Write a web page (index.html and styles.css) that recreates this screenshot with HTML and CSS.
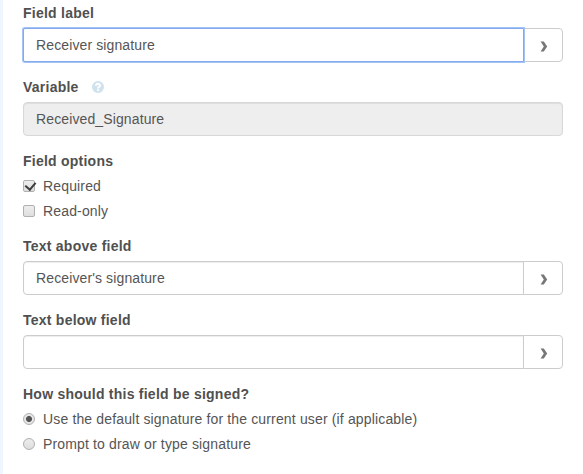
FILE: index.html
```
<!DOCTYPE html>
<html lang="en">
<head>
    <meta charset="UTF-8">
    <meta name="viewport" content="width=device-width, initial-scale=1.0">
    <title>Signature field</title>
    <link rel="stylesheet" href="styles.css">
</head>
<body>
    <form class="panel">
        <div class="form-group">
            <label class="title" for="label">Field label</label>
            <div class="input-group">
                <input class="form-control focused" type="text" id="label" value="Receiver signature">
                <button class="btn" type="button"><svg width="8" height="11" viewBox="0 0 8 11"><path d="M0.6 0.5h3.2l3.4 5-3.4 5H0.6l3.2-5z"/></svg></button>
            </div>
        </div>

        <div class="form-group">
            <label class="title" for="variable">Variable
                <svg class="help" width="12" height="12" viewBox="0 0 12 12"><circle cx="6" cy="6" r="6"/><path d="M4 4.7C4 2.2 8 2.2 8 4.5 8 6 6 5.8 6 7.4M6 8.3v1.7"/></svg>
            </label>
            <input class="form-control" type="text" id="variable" value="Received_Signature" disabled>
        </div>

        <div class="form-group">
            <div class="title">Field options</div>
            <label class="choice"><input type="checkbox" checked><span>Required</span></label>
            <label class="choice"><input type="checkbox"><span>Read-only</span></label>
        </div>

        <div class="form-group">
            <label class="title" for="above">Text above field</label>
            <div class="input-group">
                <input class="form-control" type="text" id="above" value="Receiver's signature">
                <button class="btn" type="button"><svg width="8" height="11" viewBox="0 0 8 11"><path d="M0.6 0.5h3.2l3.4 5-3.4 5H0.6l3.2-5z"/></svg></button>
            </div>
        </div>

        <div class="form-group">
            <label class="title" for="below">Text below field</label>
            <div class="input-group">
                <input class="form-control" type="text" id="below">
                <button class="btn" type="button"><svg width="8" height="11" viewBox="0 0 8 11"><path d="M0.6 0.5h3.2l3.4 5-3.4 5H0.6l3.2-5z"/></svg></button>
            </div>
        </div>

        <div class="form-group">
            <div class="title">How should this field be signed?</div>
            <label class="choice"><input type="radio" name="signing" checked><span>Use the default signature for the current user (if applicable)</span></label>
            <label class="choice"><input type="radio" name="signing"><span>Prompt to draw or type signature</span></label>
        </div>
    </form>
</body>
</html>
```

FILE: styles.css
```
* {
    box-sizing: border-box;
}
body {
    margin: 0;
    font-family: "Liberation Sans", Arial, sans-serif;
    font-size: 14px;
    line-height: 20px;
    letter-spacing: 0.15px;
    color: #555;
    background-color: #fff;
}
.panel {
    height: 474px;
    padding: 3px 20px 0;
    border-left: 3px solid #f0f6ff;
    overflow: hidden;
}
.form-group {
    margin-bottom: 15px;
}
.title {
    display: flex;
    align-items: center;
    height: 20px;
    margin-bottom: 5px;
    font-weight: bold;
    letter-spacing: 0.24px;
    color: #505050;
}
.help {
    margin-left: 13px;
    fill: #cfe2ee;
}
.help path {
    fill: none;
    stroke: #fff;
    stroke-width: 1.9;
}
.input-group {
    display: flex;
}
.form-control {
    display: block;
    width: 100%;
    height: 34px;
    padding: 6px 12px;
    font: inherit;
    letter-spacing: 0.12px;
    color: #555;
    background-color: #fff;
    border: 1px solid #ccc;
    border-radius: 4px;
    box-shadow: inset 0 1px 1px rgba(0, 0, 0, 0.075);
    outline: none;
}
.form-control:disabled {
    background-color: #eee;
    border-color: #d8d8d8;
}
.input-group .form-control {
    flex: 1;
    border-radius: 4px 0 0 4px;
}
.input-group .focused {
    position: relative;
    z-index: 1;
    border-color: #82aaec;
    border-radius: 2px 0 0 2px;
    box-shadow: 0 0 0 1px #a3c2f5;
}
.btn {
    display: flex;
    align-items: center;
    justify-content: center;
    width: 40px;
    height: 34px;
    margin-left: -1px;
    padding: 2px 0 0 2px;
    background-color: #fff;
    border: 1px solid #ccc;
    border-radius: 0 4px 4px 0;
}
.btn svg {
    fill: #777;
}
.choice {
    display: flex;
    align-items: center;
    height: 20px;
    margin-bottom: 5px;
}
.choice + .choice {
    margin-bottom: 0;
}
.choice input {
    appearance: none;
    width: 12px;
    height: 12px;
    margin: 0 8px 0 0;
    border: 1px solid #b0b0b0;
    border-radius: 2px;
    background: linear-gradient(#ededed, #dedede);
}
.choice input[type="radio"] {
    border-radius: 50%;
}
.choice input[type="radio"]:checked {
    background: radial-gradient(circle, #555 2.6px, #e6e6e6 3.4px);
}
.choice input[type="checkbox"]:checked {
    display: flex;
}
.choice input[type="checkbox"]:checked::before {
    content: "";
    width: 5px;
    height: 8px;
    margin: 0 0 0 3px;
    border: solid #3c3c3c;
    border-width: 0 2px 2px 0;
    transform: translateY(-1px) rotate(40deg);
}
```
